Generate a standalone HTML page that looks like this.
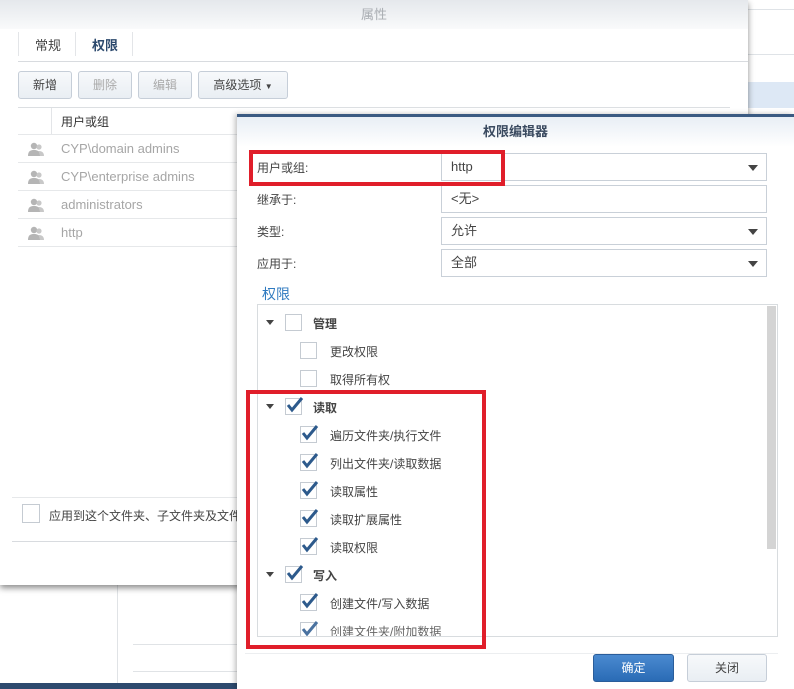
<!DOCTYPE html>
<html><head><meta charset="utf-8"><style>
*{box-sizing:border-box;margin:0;padding:0}
body{width:794px;height:689px;overflow:hidden;background:#fff;position:relative;font-family:"Liberation Sans","Noto Sans CJK SC",sans-serif;font-size:12px;color:#333}
.abs{position:absolute}
.btn{position:absolute;top:71px;height:28px;border:1px solid #c6ced8;border-radius:3px;background:linear-gradient(#f7f9fb,#e9eef3);text-align:center;line-height:26px;font-size:12px}
.row{position:absolute;left:18px;width:712px;height:28px;border-bottom:1px solid #e6e8ea;color:#a6a6a6;font-size:13px;line-height:28px}
.row span{position:absolute;left:43px}
.ic{position:absolute;left:10px;top:7px;width:16px;height:14px}
.lbl{position:absolute;left:257px;font-size:12px;color:#444}
.inp{position:absolute;left:441px;width:326px;height:28px;border:1px solid #c9d0d8;background:#fff;font-size:13px;line-height:26px;padding-left:9px;color:#444}
.arr{position:absolute;right:8px;top:11px;width:0;height:0;border-left:5px solid transparent;border-right:5px solid transparent;border-top:6px solid #444}
.cb{position:absolute;width:17px;height:17px;border:1px solid #c5cbd2;background:#fff}
.tri{position:absolute;width:0;height:0;border-left:4px solid transparent;border-right:4px solid transparent;border-top:5px solid #444}
.t{position:absolute;font-size:12px;color:#444}
.chk{position:absolute;left:0px;top:-3px}
</style></head><body>
<div class="abs" style="left:748px;top:9px;width:46px;height:1px;background:#dfe3e7"></div>
<div class="abs" style="left:748px;top:54px;width:46px;height:1px;background:#dfe3e7"></div>
<div class="abs" style="left:748px;top:82px;width:46px;height:26px;background:#dde8f5"></div>
<div class="abs" style="left:117px;top:585px;width:1px;height:104px;background:#e0e3e6"></div>
<div class="abs" style="left:133px;top:644px;width:110px;height:1px;background:#e0e3e6"></div>
<div class="abs" style="left:133px;top:671px;width:110px;height:1px;background:#e0e3e6"></div>
<div class="abs" style="left:0;top:683px;width:240px;height:6px;background:#2d4a6e"></div>

<div class="abs" style="left:0;top:0;width:748px;height:585px;background:#fff;box-shadow:0 3px 6px rgba(0,0,0,.45)">
 <div class="abs" style="left:0;top:0;width:748px;height:29px;background:linear-gradient(#e5e8ec,#f9fafb);text-align:center;line-height:30px;color:#a9adb2;font-size:13px">属性</div>
 <div class="abs" style="left:18px;top:32px;width:1px;height:24px;background:#e3e5e8"></div>
 <div class="abs" style="left:75px;top:32px;width:1px;height:24px;background:#e3e5e8"></div>
 <div class="abs" style="left:132px;top:32px;width:1px;height:24px;background:#e3e5e8"></div>
 <div class="abs" style="left:35px;top:35px;font-size:13px;color:#444">常规</div>
 <div class="abs" style="left:92px;top:35px;font-size:13px;color:#2d4a6e;font-weight:bold">权限</div>
 <div class="abs" style="left:18px;top:61px;width:730px;height:1px;background:#d8dbdf"></div>
 <div class="btn" style="left:18px;width:54px;color:#444">新增</div>
 <div class="btn" style="left:78px;width:54px;color:#aaa">删除</div>
 <div class="btn" style="left:138px;width:54px;color:#aaa">编辑</div>
 <div class="btn" style="left:198px;width:90px;color:#444">高级选项 <span style="font-size:8px">▼</span></div>
 <div class="abs" style="left:18px;top:107px;width:712px;height:1px;background:#dcdfe2"></div>
 <div class="abs" style="left:51px;top:108px;width:1px;height:26px;background:#e3e5e8"></div>
 <div class="abs" style="left:61px;top:113px;font-size:12px;color:#333">用户或组</div>
 <div class="abs" style="left:18px;top:134px;width:712px;height:1px;background:#e6e8ea"></div>
 <div class="row" style="top:135px"><svg class="ic" viewBox="0 0 16 14"><circle cx="6" cy="4" r="3.2" fill="#b5b5b5"/><path d="M0 14c0-5 2.5-6 6-6s6 1 6 6z" fill="#b5b5b5"/><circle cx="11" cy="5" r="2.6" fill="#c8c8c8"/><path d="M12 14c0-3-1-4.5-2-5 3 0 6 .5 6 5z" fill="#c8c8c8"/></svg><span>CYP\domain admins</span></div>
 <div class="row" style="top:163px"><svg class="ic" viewBox="0 0 16 14"><circle cx="6" cy="4" r="3.2" fill="#b5b5b5"/><path d="M0 14c0-5 2.5-6 6-6s6 1 6 6z" fill="#b5b5b5"/><circle cx="11" cy="5" r="2.6" fill="#c8c8c8"/><path d="M12 14c0-3-1-4.5-2-5 3 0 6 .5 6 5z" fill="#c8c8c8"/></svg><span>CYP\enterprise admins</span></div>
 <div class="row" style="top:191px"><svg class="ic" viewBox="0 0 16 14"><circle cx="6" cy="4" r="3.2" fill="#b5b5b5"/><path d="M0 14c0-5 2.5-6 6-6s6 1 6 6z" fill="#b5b5b5"/><circle cx="11" cy="5" r="2.6" fill="#c8c8c8"/><path d="M12 14c0-3-1-4.5-2-5 3 0 6 .5 6 5z" fill="#c8c8c8"/></svg><span>administrators</span></div>
 <div class="row" style="top:219px"><svg class="ic" viewBox="0 0 16 14"><circle cx="6" cy="4" r="3.2" fill="#b5b5b5"/><path d="M0 14c0-5 2.5-6 6-6s6 1 6 6z" fill="#b5b5b5"/><circle cx="11" cy="5" r="2.6" fill="#c8c8c8"/><path d="M12 14c0-3-1-4.5-2-5 3 0 6 .5 6 5z" fill="#c8c8c8"/></svg><span>http</span></div>
 <div class="abs" style="left:12px;top:497px;width:736px;height:1px;background:#e6e8ea"></div>
 <div class="cb" style="left:22px;top:504px;width:18px;height:19px"></div>
 <div class="abs" style="left:49px;top:507px;font-size:12px;color:#444;white-space:nowrap">应用到这个文件夹、子文件夹及文件</div>
 <div class="abs" style="left:12px;top:541px;width:736px;height:1px;background:#d8dbdf"></div>
</div>

<div class="abs" style="left:237px;top:114px;width:557px;height:575px;background:#fff;border-top:3px solid #3a5a82;box-shadow:-2px 0 5px rgba(0,0,0,.25)">
 <div class="abs" style="left:0;top:0;width:557px;height:30px;background:linear-gradient(#e8eef5,#fff);text-align:center;line-height:30px;font-size:13px;font-weight:bold;color:#3a4a60">权限编辑器</div>
</div>
<div class="lbl" style="top:159px">用户或组:</div>
<div class="inp" style="top:153px">http<div class="arr"></div></div>
<div class="lbl" style="top:191px">继承于:</div>
<div class="inp" style="top:185px">&lt;无&gt;</div>
<div class="lbl" style="top:223px">类型:</div>
<div class="inp" style="top:217px">允许<div class="arr"></div></div>
<div class="lbl" style="top:255px">应用于:</div>
<div class="inp" style="top:249px">全部<div class="arr"></div></div>
<div class="abs" style="left:262px;top:284px;font-size:14px;color:#2f7ac0">权限</div>

<div class="abs" style="left:257px;top:304px;width:521px;height:333px;border:1px solid #d8dcdf;overflow:hidden">
 <div class="abs" style="left:509px;top:1px;width:9px;height:243px;background:#d4d4d4"></div>
</div>
<div class="abs" style="left:245px;top:653px;width:533px;height:1px;background:#eceef0"></div>

<div class="tri" style="left:266px;top:320px"></div><div class="cb" style="left:285px;top:314px"></div><div class="t" style="left:313px;top:315px;font-weight:bold">管理</div>
<div class="cb" style="left:300px;top:342px"></div><div class="t" style="left:330px;top:343px">更改权限</div>
<div class="cb" style="left:300px;top:370px"></div><div class="t" style="left:330px;top:371px">取得所有权</div>

<div class="tri" style="left:266px;top:404px"></div><div class="cb" style="left:285px;top:398px"><svg class="chk" width="18" height="18" viewBox="0 0 18 18"><path d="M2 9l4 5L16 2" stroke="#2d5a8c" stroke-width="3" fill="none"/></svg></div><div class="t" style="left:313px;top:399px;font-weight:bold">读取</div>
<div class="cb" style="left:300px;top:426px"><svg class="chk" width="18" height="18" viewBox="0 0 18 18"><path d="M2 9l4 5L16 2" stroke="#2d5a8c" stroke-width="3" fill="none"/></svg></div><div class="t" style="left:330px;top:427px">遍历文件夹/执行文件</div>
<div class="cb" style="left:300px;top:454px"><svg class="chk" width="18" height="18" viewBox="0 0 18 18"><path d="M2 9l4 5L16 2" stroke="#2d5a8c" stroke-width="3" fill="none"/></svg></div><div class="t" style="left:330px;top:455px">列出文件夹/读取数据</div>
<div class="cb" style="left:300px;top:482px"><svg class="chk" width="18" height="18" viewBox="0 0 18 18"><path d="M2 9l4 5L16 2" stroke="#2d5a8c" stroke-width="3" fill="none"/></svg></div><div class="t" style="left:330px;top:483px">读取属性</div>
<div class="cb" style="left:300px;top:510px"><svg class="chk" width="18" height="18" viewBox="0 0 18 18"><path d="M2 9l4 5L16 2" stroke="#2d5a8c" stroke-width="3" fill="none"/></svg></div><div class="t" style="left:330px;top:511px">读取扩展属性</div>
<div class="cb" style="left:300px;top:538px"><svg class="chk" width="18" height="18" viewBox="0 0 18 18"><path d="M2 9l4 5L16 2" stroke="#2d5a8c" stroke-width="3" fill="none"/></svg></div><div class="t" style="left:330px;top:539px">读取权限</div>

<div class="tri" style="left:266px;top:572px"></div><div class="cb" style="left:285px;top:566px"><svg class="chk" width="18" height="18" viewBox="0 0 18 18"><path d="M2 9l4 5L16 2" stroke="#2d5a8c" stroke-width="3" fill="none"/></svg></div><div class="t" style="left:313px;top:567px;font-weight:bold">写入</div>
<div class="cb" style="left:300px;top:594px"><svg class="chk" width="18" height="18" viewBox="0 0 18 18"><path d="M2 9l4 5L16 2" stroke="#2d5a8c" stroke-width="3" fill="none"/></svg></div><div class="t" style="left:330px;top:595px">创建文件/写入数据</div>
<div class="abs" style="left:258px;top:618px;width:200px;height:18px;overflow:hidden">
 <div class="cb" style="left:42px;top:4px"><svg class="chk" width="18" height="18" viewBox="0 0 18 18"><path d="M2 9l4 5L16 2" stroke="#4a72a0" stroke-width="3" fill="none"/></svg></div><div class="t" style="left:72px;top:5px;color:#666">创建文件夹/附加数据</div>
</div>

<div class="abs" style="left:593px;top:654px;width:81px;height:28px;border:1px solid #2a5d9a;border-radius:3px;background:linear-gradient(#4a8ad0,#2a6bb5);color:#fff;text-align:center;line-height:26px;font-size:12px">确定</div>
<div class="abs" style="left:687px;top:654px;width:80px;height:28px;border:1px solid #c6ced8;border-radius:3px;background:linear-gradient(#f7f9fb,#e9eef3);color:#444;text-align:center;line-height:26px;font-size:12px">关闭</div>

<div class="abs" style="left:249px;top:150px;width:256px;height:36px;border:4px solid #e01e2a"></div>
<div class="abs" style="left:246px;top:390px;width:240px;height:259px;border:4px solid #e01e2a"></div>
</body></html>
